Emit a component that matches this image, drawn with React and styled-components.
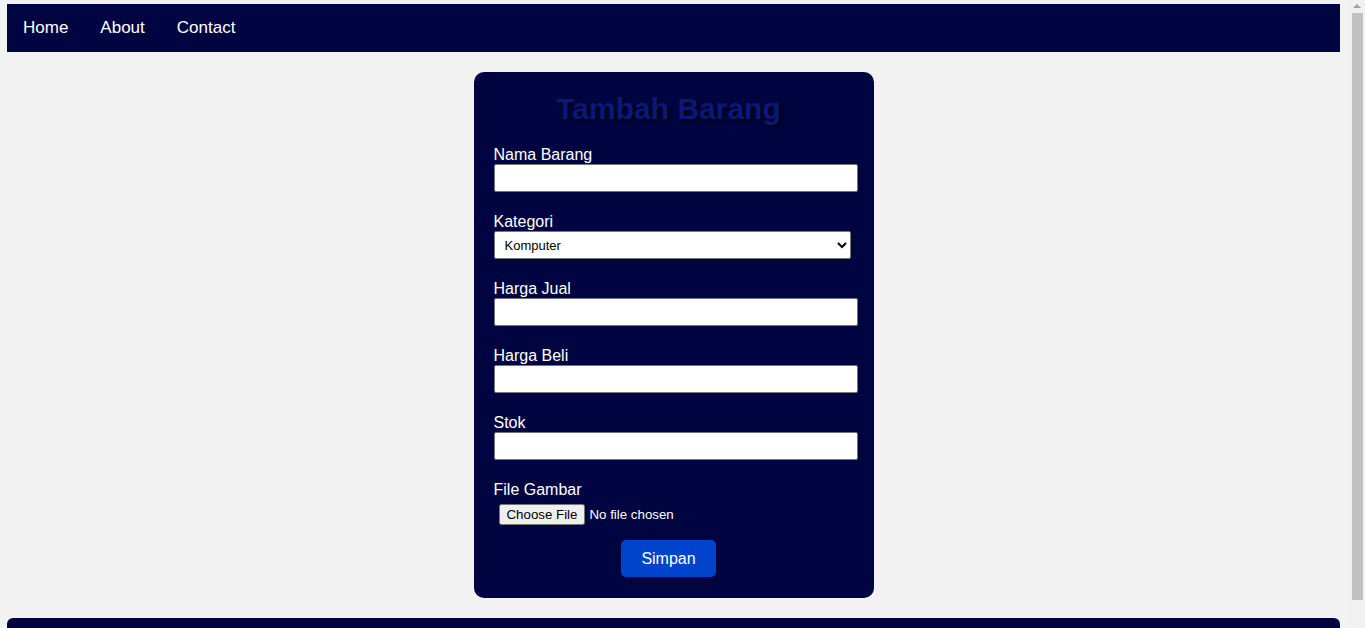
import styled, { createGlobalStyle } from "styled-components";

const GlobalStyle = createGlobalStyle`
  body {
    margin: 4px 25px 8px 7px;
    background: #f2f2f2;
    font-family: "Liberation Sans", Arial, sans-serif;
  }
`;

const Nav = styled.nav`
  background: #000541;
  height: 48px;
  display: flex;
  align-items: center;
`;

const NavLink = styled.a`
  color: #fff;
  text-decoration: none;
  font-size: 17px;
  padding: 0 16px;
`;

const Main = styled.main`
  display: flex;
  justify-content: center;
  padding: 20px 0;
`;

const Card = styled.form`
  width: 400px;
  box-sizing: border-box;
  background: #000541;
  border-radius: 10px;
  padding: 20px 30px 21px 20px;
`;

const Title = styled.h2`
  margin: 0 0 19px;
  text-align: center;
  font-size: 30px;
  font-weight: bold;
  color: #0a1878;
  text-shadow: 2px 2px 4px rgba(0, 0, 0, 0.8);
`;

const Field = styled.div`
  margin-bottom: ${(p) => (p.$last ? "10px" : "20px")};
`;

const Label = styled.label`
  display: block;
  color: #fff;
  font-size: 16px;
  line-height: 17px;
  padding-top: 1px;
  margin-bottom: 1px;
`;

const TextInput = styled.input`
  display: block;
  box-sizing: border-box;
  width: 364px;
  height: 28px;
  padding: 0 4px;
  border: 1px solid #767676;
  border-radius: 2px;
  background: #fff;
  font-family: inherit;
`;

const Select = styled.select`
  display: block;
  box-sizing: border-box;
  width: 357px;
  height: 28px;
  padding: 0 6px;
  border: 1px solid #767676;
  border-radius: 2px;
  background: #fff;
  font-family: "Liberation Sans", Arial, sans-serif;
  font-size: 13px;
  color: #000;
`;

const FileInput = styled.input`
  display: block;
  padding: 5px;
  color: #fff;
  font-family: "Liberation Sans", Arial, sans-serif;
  font-size: 13.3px;

  &::file-selector-button {
    font-family: inherit;
    font-size: 13.3px;
    margin-right: 4px;
  }
`;

const Actions = styled.div`
  text-align: center;
`;

const SaveButton = styled.button`
  background: #0044cc;
  color: #fff;
  border: none;
  border-radius: 5px;
  padding: 10px 20px;
  font-family: "Liberation Sans", Arial, sans-serif;
  font-size: 16px;
  line-height: 17px;
  cursor: pointer;
`;

const Footer = styled.footer`
  background: #000541;
  border-radius: 6px 6px 0 0;
  height: 60px;
`;

const ScrollTrack = styled.div`
  position: fixed;
  top: 0;
  right: 0;
  bottom: 0;
  width: 15px;
  background: #f1f1f1;
`;

const ScrollArrow = styled.div`
  position: absolute;
  top: 4px;
  left: 3px;
  width: 0;
  height: 0;
  border-left: 4px solid transparent;
  border-right: 4px solid transparent;
  border-bottom: 4px solid #a3a3a3;
`;

const ScrollThumb = styled.div`
  position: absolute;
  top: 13px;
  left: 2px;
  width: 11px;
  height: 587px;
  background: #c1c1c1;
`;

const fields = [
  { id: "nama", label: "Nama Barang" },
  { id: "kategori", label: "Kategori", select: true },
  { id: "jual", label: "Harga Jual" },
  { id: "beli", label: "Harga Beli" },
  { id: "stok", label: "Stok" },
];

export default function App() {
  return (
    <>
      <GlobalStyle />
      <Nav>
        <NavLink href="#">Home</NavLink>
        <NavLink href="#">About</NavLink>
        <NavLink href="#">Contact</NavLink>
      </Nav>
      <Main>
        <Card onSubmit={(e) => e.preventDefault()}>
          <Title>Tambah Barang</Title>
          {fields.map((f) => (
            <Field key={f.id}>
              <Label htmlFor={f.id}>{f.label}</Label>
              {f.select ? (
                <Select id={f.id} defaultValue="Komputer">
                  <option>Komputer</option>
                  <option>Elektronik</option>
                  <option>Aksesoris</option>
                </Select>
              ) : (
                <TextInput id={f.id} type="text" />
              )}
            </Field>
          ))}
          <Field $last>
            <Label htmlFor="gambar">File Gambar</Label>
            <FileInput id="gambar" type="file" />
          </Field>
          <Actions>
            <SaveButton type="submit">Simpan</SaveButton>
          </Actions>
        </Card>
      </Main>
      <Footer />
      <ScrollTrack>
        <ScrollArrow />
        <ScrollThumb />
      </ScrollTrack>
    </>
  );
}
